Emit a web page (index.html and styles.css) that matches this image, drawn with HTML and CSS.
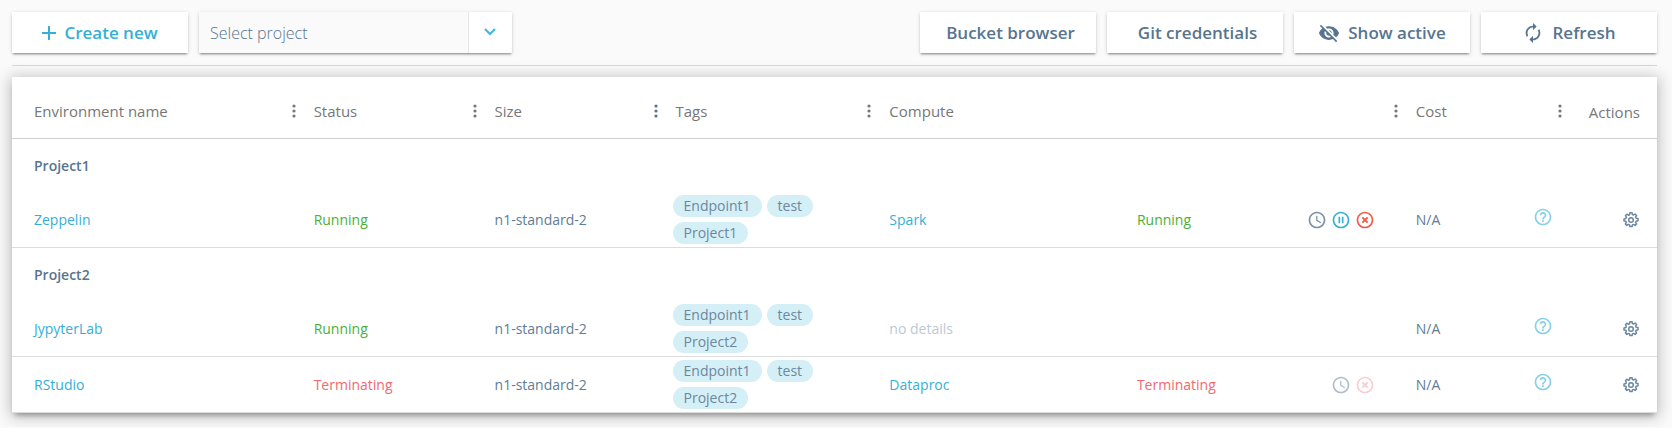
FILE: index.html
```html
<!DOCTYPE html>
<html lang="en">
<head>
<meta charset="utf-8">
<title>Environments</title>
<link rel="stylesheet" href="styles.css">
</head>
<body>
<svg class="sprite" aria-hidden="true">
  <symbol id="dots" viewBox="0 0 4 16"><circle cx="2" cy="3" r="1.6"/><circle cx="2" cy="8" r="1.6"/><circle cx="2" cy="13" r="1.6"/></symbol>
  <symbol id="clock" viewBox="0 0 24 24"><path d="M11.99 2C6.47 2 2 6.48 2 12s4.47 10 9.99 10C17.52 22 22 17.52 22 12S17.52 2 11.99 2zM12 20c-4.42 0-8-3.58-8-8s3.58-8 8-8 8 3.58 8 8-3.58 8-8 8zM11 7v6l5.2 3 .8-1.300-4.500-2.600V7z"/></symbol>
  <symbol id="pause" viewBox="0 0 24 24"><path d="M9 16h2V8H9v8zm3-14C6.480 2 2 6.480 2 12s4.480 10 10 10 10-4.480 10-10S17.520 2 12 2zm0 18c-4.410 0-8-3.590-8-8s3.590-8 8-8 8 3.590 8 8-3.590 8-8 8zm1-4h2V8h-2v8z"/></symbol>
  <symbol id="stop" viewBox="0 0 24 24"><path d="M12 2C6.470 2 2 6.470 2 12s4.470 10 10 10 10-4.470 10-10S17.530 2 12 2zm0 18c-4.410 0-8-3.590-8-8s3.590-8 8-8 8 3.590 8 8-3.590 8-8 8z"/><path d="M8.800 8.800l6.400 6.400M15.200 8.800l-6.400 6.400" stroke="currentColor" stroke-width="2.400"/></symbol>
  <symbol id="help" viewBox="0 0 24 24"><path d="M11 18h2v-2h-2v2zm1-16C6.480 2 2 6.480 2 12s4.480 10 10 10 10-4.480 10-10S17.520 2 12 2zm0 18c-4.410 0-8-3.590-8-8s3.590-8 8-8 8 3.590 8 8-3.590 8-8 8zm0-14c-2.210 0-4 1.790-4 4h2c0-1.100.9-2 2-2s2 .9 2 2c0 2-3 1.750-3 5h2c0-2.250 3-2.500 3-5 0-2.210-1.790-4-4-4z"/></symbol>
  <symbol id="gear" viewBox="0 0 16 16"><g fill="none" stroke="currentColor" stroke-width="1.500" stroke-linejoin="round"><path d="M6.900.8h2.200l.3 1.700 1.200.5 1.500-1 1.500 1.500-1 1.500.5 1.200 1.900.4v2.200l-1.900.4-.5 1.200 1 1.500-1.500 1.500-1.500-1-1.200.5-.3 1.700H6.900l-.3-1.700-1.200-.5-1.500 1-1.500-1.500 1-1.500-.5-1.200L1 9.100V6.900l1.900-.5.5-1.200-1-1.500 1.500-1.500 1.500 1 1.200-.5z"/><circle cx="8" cy="8" r="2.300"/></g></symbol>
  <symbol id="eye-off" viewBox="0 0 24 24"><path d="M12 7c2.760 0 5 2.240 5 5 0 .65-.13 1.260-.36 1.830l2.920 2.920c1.510-1.260 2.700-2.890 3.430-4.750-1.730-4.390-6-7.500-11-7.500-1.400 0-2.740.25-3.980.7l2.160 2.160C10.740 7.130 11.350 7 12 7zM2 4.270l2.280 2.280.46.46C3.080 8.300 1.780 10.020 1 12c1.730 4.390 6 7.500 11 7.500 1.550 0 3.030-.3 4.380-.84l.42.42L19.730 22 21 20.730 3.270 3 2 4.270zM7.530 9.800l1.550 1.550c-.05.21-.08.43-.08.65 0 1.660 1.340 3 3 3 .22 0 .44-.03.65-.08l1.550 1.550c-.67.33-1.410.53-2.200.53-2.760 0-5-2.240-5-5 0-.79.2-1.530.53-2.200zm4.310-.78l3.150 3.150.02-.16c0-1.660-1.340-3-3-3l-.17.010z"/></symbol>
  <symbol id="refresh" viewBox="0 0 24 24"><path d="M12 6v3l4-4-4-4v3c-4.420 0-8 3.580-8 8 0 1.570.46 3.030 1.240 4.260L6.700 14.800c-.45-.83-.7-1.790-.7-2.800 0-3.310 2.690-6 6-6zm6.760 1.740L17.300 9.200c.44.84.7 1.790.7 2.800 0 3.310-2.690 6-6 6v-3l-4 4 4 4v-3c4.420 0 8-3.580 8-8 0-1.570-.46-3.030-1.240-4.260z"/></symbol>
</svg>

<header class="toolbar">
  <button class="button button-primary" type="button">
    <svg class="icon-plus" viewBox="0 0 14 14" aria-hidden="true"><path d="M7 0v14M0 7h14" stroke="currentColor" stroke-width="2"/></svg>
    Create new
  </button>
  <div class="select">
    <input class="select-input" type="text" placeholder="Select project" aria-label="Select project">
    <button class="select-toggle" type="button" aria-label="Open project list"><svg viewBox="0 0 12 8" aria-hidden="true"><path d="M1 1l5 5 5-5" fill="none" stroke="currentColor" stroke-width="2.200"/></svg></button>
  </div>
  <div class="toolbar-actions">
    <button class="button button-text" type="button">Bucket browser</button>
    <button class="button button-text" type="button">Git credentials</button>
    <button class="button" type="button"><svg class="icon-large"><use href="#eye-off"/></svg>Show active</button>
    <button class="button" type="button"><svg class="icon-large"><use href="#refresh"/></svg>Refresh</button>
  </div>
</header>

<main class="card">
  <table class="grid">
    <colgroup><col class="col-name"><col class="col-status"><col class="col-size"><col class="col-tags"><col class="col-compute"><col class="col-cost"><col class="col-actions"></colgroup>
    <thead>
      <tr>
        <th>Environment name</th>
        <th><div class="head"><button class="menu" type="button" aria-label="Filter status"><svg><use href="#dots"/></svg></button>Status</div></th>
        <th><div class="head"><button class="menu" type="button" aria-label="Filter size"><svg><use href="#dots"/></svg></button>Size</div></th>
        <th><div class="head"><button class="menu menu-dark" type="button" aria-label="Filter tags"><svg><use href="#dots"/></svg></button>Tags</div></th>
        <th><div class="head"><button class="menu" type="button" aria-label="Filter compute"><svg><use href="#dots"/></svg></button>Compute</div></th>
        <th><div class="head"><button class="menu" type="button" aria-label="Filter cost"><svg><use href="#dots"/></svg></button>Cost</div></th>
        <th><div class="head head-last"><button class="menu" type="button" aria-label="Filter actions"><svg><use href="#dots"/></svg></button><span class="head-actions">Actions</span></div></th>
      </tr>
    </thead>
    <tbody>
      <tr class="group"><th colspan="7" scope="rowgroup">Project1</th></tr>
      <tr class="row">
        <td><a href="#zeppelin">Zeppelin</a></td>
        <td class="running">Running</td>
        <td>n1-standard-2</td>
        <td class="tags-cell"><div class="tags"><span class="tag">Endpoint1</span><span class="tag">test</span><span class="tag">Project1</span></div></td>
        <td><div class="compute"><a href="#spark">Spark</a><span class="running">Running</span><div class="icons">
          <button class="icon" type="button" aria-label="Schedule"><svg><use href="#clock"/></svg></button>
          <button class="icon icon-blue" type="button" aria-label="Pause"><svg><use href="#pause"/></svg></button>
          <button class="icon icon-red" type="button" aria-label="Terminate"><svg><use href="#stop"/></svg></button>
        </div></div></td>
        <td><div class="cost">N/A<button class="icon icon-help" type="button" aria-label="Cost help"><svg><use href="#help"/></svg></button></div></td>
        <td class="actions"><button class="gear" type="button" aria-label="Settings"><svg><use href="#gear"/></svg></button></td>
      </tr>
    </tbody>
    <tbody>
      <tr class="group"><th colspan="7" scope="rowgroup">Project2</th></tr>
      <tr class="row">
        <td><a href="#jypyterlab">JypyterLab</a></td>
        <td class="running">Running</td>
        <td>n1-standard-2</td>
        <td class="tags-cell"><div class="tags"><span class="tag">Endpoint1</span><span class="tag">test</span><span class="tag">Project2</span></div></td>
        <td class="muted">no details</td>
        <td><div class="cost">N/A<button class="icon icon-help" type="button" aria-label="Cost help"><svg><use href="#help"/></svg></button></div></td>
        <td class="actions"><button class="gear" type="button" aria-label="Settings"><svg><use href="#gear"/></svg></button></td>
      </tr>
      <tr class="row">
        <td><a href="#rstudio">RStudio</a></td>
        <td class="terminating">Terminating</td>
        <td>n1-standard-2</td>
        <td class="tags-cell"><div class="tags"><span class="tag">Endpoint1</span><span class="tag">test</span><span class="tag">Project2</span></div></td>
        <td><div class="compute"><a href="#dataproc">Dataproc</a><span class="terminating">Terminating</span><div class="icons">
          <button class="icon icon-off" type="button" aria-label="Schedule" disabled><svg><use href="#clock"/></svg></button>
          <button class="icon icon-red icon-faint" type="button" aria-label="Terminate" disabled><svg><use href="#stop"/></svg></button>
        </div></div></td>
        <td><div class="cost">N/A<button class="icon icon-help" type="button" aria-label="Cost help"><svg><use href="#help"/></svg></button></div></td>
        <td class="actions"><button class="gear" type="button" aria-label="Settings"><svg><use href="#gear"/></svg></button></td>
      </tr>
    </tbody>
  </table>
</main>
</body>
</html>
```
FILE: styles.css
```css
* { box-sizing: border-box; }
body {
  margin: 0;
  padding: 12px 15px 14px 12px;
  background: #fafafa;
  color: #607d96;
  font: 14px/20px "Open Sans", sans-serif;
}
button { margin: 0; padding: 0; border: 0; background: none; color: inherit; font: inherit; cursor: pointer; }
a { color: #35afd5; text-decoration: none; }
svg { display: block; fill: currentColor; }
.sprite { display: none; }

.toolbar { display: flex; gap: 11px; padding-bottom: 12px; border-bottom: 1px solid #d8d8d8; }
.toolbar-actions { display: flex; gap: 11px; margin-left: auto; }
.button {
  display: flex; align-items: center; justify-content: center; gap: 8px;
  width: 176px; height: 41px;
  background: #fff; color: #577590;
  font-size: 17px; font-weight: 600; line-height: 24px;
  box-shadow: 0 2px 2px -1px rgba(0,0,0,.4), 0 1px 4px rgba(0,0,0,.16);
}
.button-primary { color: #35afd5; }
.button-text { padding-left: 5px; }
.icon-plus { width: 14px; height: 14px; }
.icon-large { width: 22px; height: 22px; }
.select { display: flex; width: 313px; height: 41px; box-shadow: 0 2px 2px -1px rgba(0,0,0,.4), 0 1px 4px rgba(0,0,0,.16); }
.select-input { flex: 1; min-width: 0; padding: 0 11px; border: 0; border-right: 1px solid #e6e6e6; background: #fafafa; font: 300 16px/24px "Open Sans", sans-serif; color: #577590; }
.select-input::placeholder { color: #577590; opacity: 1; }
.select-toggle { display: flex; align-items: center; justify-content: center; width: 43px; padding: 0 2px 2px 0; background: #fff; color: #45b6e0; }
.select-toggle svg { width: 12px; height: 8px; }

.card { margin-top: 11px; background: #fff; box-shadow: 0 5px 5px -3px rgba(0,0,0,.3), 0 2px 14px 2px rgba(0,0,0,.24); }
.grid { width: 100%; border-collapse: separate; border-spacing: 0; table-layout: fixed; }
.col-name { width: 17%; }
.col-status, .col-size { width: 11%; }
.col-tags { width: 13%; }
.col-compute { width: 32%; }
.col-cost { width: 10%; }
.col-actions { width: 6%; }
th, td { padding: 0 0 0 22px; text-align: left; font-weight: 400; }
thead th { height: 62px; padding-top: 6px; border-bottom: 1px solid #d0d0d0; color: #777; font-size: 15px; }
thead th + th { padding-left: 0; }
.head { display: flex; align-items: center; gap: 18px; }
.head-last { justify-content: space-between; padding-right: 17px; }
.head-actions { padding-top: 3px; }
.menu svg { width: 4px; height: 16px; }
.menu-dark { color: #577590; }
.group th { height: 53px; font-weight: 600; color: #577590; }
.row td { height: 56px; border-bottom: 1px solid #dcdcdc; }
.row .tags-cell { padding-left: 19px; }
.tags { display: flex; flex-wrap: wrap; gap: 5px; }
.tag { padding: 0 11px; border-radius: 11px; background: #d5eff6; color: #6c87a0; line-height: 22px; }
.running { color: #49af38; }
.terminating { color: #f1696e; }
.muted { color: #bcc9d6; }
.compute { display: grid; grid-template-columns: 51fr 28fr 21fr; align-items: center; padding-right: 19px; }
.icons { display: flex; justify-content: flex-end; gap: 4px; }
.icon svg { width: 20px; height: 20px; }
.icon { color: #7b90aa; }
.icon-blue { color: #35afd5; }
.icon-red { color: #f0594b; }
.icon-off { color: #b0bccb; }
.icon-faint { color: #f7cfce; }
.cost { display: flex; align-items: center; justify-content: space-between; padding-right: 5px; }
.icon-help { padding-bottom: 5px; color: #86d0e8; }
.row .actions { padding-right: 18px; }
.gear { display: block; margin-left: auto; color: #6c87a0; }
.gear svg { width: 16px; height: 16px; }
```
